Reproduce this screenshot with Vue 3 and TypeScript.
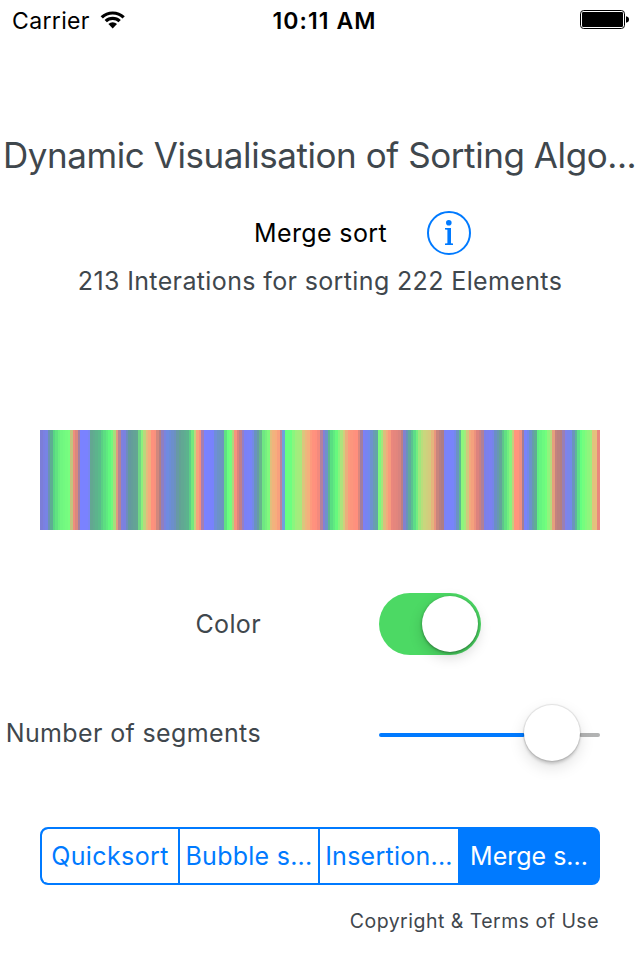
<script setup lang="ts">
import { ref, computed } from 'vue'

type Stop = [number, number, number, number]

const elements = 222
const stripWidth = 560
const useColor = ref(true)
const segments = ref(0.874)
const algorithms = ['Quicksort', 'Bubble s...', 'Insertion...', 'Merge s...']
const selected = ref(3)

// Colour samples along the strip: offset in px, then r, g, b.
const stops: Stop[] = [
  [0, 125, 125, 210], [6, 122, 130, 235], [8, 110, 140, 190], [11, 95, 165, 150], [13, 85, 210, 130], [20, 110, 245, 128], [31, 122, 255, 128], [32, 255, 145, 125], [37, 215, 135, 125], [40, 140, 122, 180],
  [41, 122, 130, 255], [49, 122, 130, 255], [51, 100, 165, 145], [59, 90, 185, 140], [63, 90, 215, 130], [71, 100, 255, 125], [74, 150, 235, 125], [76, 240, 165, 125], [79, 195, 130, 130],
  [81, 130, 128, 220], [86, 120, 130, 225], [88, 100, 150, 160], [98, 100, 168, 145], [101, 120, 250, 125], [104, 170, 225, 125], [106, 220, 195, 125], [110, 245, 170, 125], [112, 255, 145, 125], [116, 245, 145, 125], [118, 190, 130, 125], [121, 170, 125, 135],
  [123, 130, 128, 220], [128, 108, 140, 225], [135, 108, 145, 190], [139, 100, 160, 150], [148, 92, 180, 142], [150, 90, 205, 135], [153, 120, 235, 125], [155, 190, 215, 125], [157, 240, 170, 125], [159, 255, 145, 125], [161, 240, 140, 125], [163, 150, 125, 190],
  [165, 122, 130, 255], [173, 120, 130, 252], [176, 108, 145, 205], [183, 108, 148, 190], [185, 95, 220, 130], [188, 105, 255, 128], [192, 125, 250, 125], [194, 235, 170, 125], [196, 250, 140, 125], [198, 220, 132, 125], [202, 175, 125, 145],
  [204, 122, 128, 245], [212, 120, 132, 250], [216, 105, 148, 185], [220, 100, 165, 145], [223, 110, 230, 130], [229, 130, 250, 125], [231, 235, 185, 125], [237, 250, 170, 125], [240, 245, 150, 125], [241, 180, 130, 160],
  [243, 115, 135, 245], [245, 100, 255, 128], [251, 108, 255, 128], [255, 155, 240, 125], [262, 175, 230, 125], [264, 230, 190, 125], [269, 245, 175, 125], [272, 255, 148, 125], [277, 255, 142, 125], [280, 235, 135, 125], [282, 150, 125, 175],
  [285, 122, 130, 240], [288, 95, 170, 150], [291, 88, 220, 130], [297, 105, 252, 125], [300, 150, 240, 125], [304, 210, 205, 125], [308, 250, 155, 125], [317, 255, 142, 125], [320, 205, 132, 125], [322, 155, 125, 165],
  [324, 125, 128, 245], [330, 112, 138, 235], [333, 108, 150, 185], [337, 100, 165, 165], [339, 120, 250, 125], [342, 165, 230, 125], [345, 235, 180, 125], [349, 250, 160, 125], [351, 235, 135, 125], [359, 222, 132, 125], [363, 175, 125, 135],
  [365, 115, 130, 230], [368, 100, 155, 165], [373, 90, 200, 140], [376, 95, 240, 130], [380, 165, 230, 125], [384, 200, 215, 125], [391, 215, 200, 125], [394, 245, 155, 125], [398, 190, 128, 125], [403, 170, 125, 135],
  [405, 122, 130, 252], [414, 120, 132, 250], [418, 105, 150, 185], [420, 92, 185, 145], [422, 135, 250, 125], [426, 170, 230, 125], [429, 240, 175, 125], [434, 245, 155, 125], [437, 225, 132, 125], [442, 190, 128, 130],
  [445, 125, 128, 230], [452, 122, 128, 245], [455, 108, 142, 200], [461, 98, 165, 150], [464, 90, 215, 132], [470, 125, 250, 125], [473, 200, 205, 125], [475, 255, 150, 125], [480, 255, 148, 125], [483, 165, 125, 145],
  [485, 122, 130, 255], [489, 112, 138, 230], [492, 105, 150, 180], [496, 95, 175, 145], [498, 95, 240, 130], [506, 115, 255, 125], [510, 165, 235, 125], [513, 235, 165, 125], [515, 200, 130, 125], [522, 175, 126, 130],
  [525, 130, 128, 235], [531, 115, 138, 235], [534, 105, 150, 180], [537, 90, 195, 142], [540, 95, 255, 130], [545, 125, 252, 125], [551, 155, 240, 125], [553, 225, 195, 125], [557, 232, 190, 125], [558, 240, 140, 125], [560, 225, 130, 125],
]

function colorAt(x: number): string {
  const next = Math.max(1, stops.findIndex((s) => s[0] >= x))
  const a = stops[next - 1]
  const b = stops[next]
  const t = Math.min(1, Math.max(0, (x - a[0]) / (b[0] - a[0])))
  const [r, g, bl] = [1, 2, 3].map((i) => Math.round(a[i] + (b[i] - a[i]) * t))
  if (useColor.value) return `rgb(${r}, ${g}, ${bl})`
  const grey = Math.round((r + g + bl) / 3)
  return `rgb(${grey}, ${grey}, ${grey})`
}

const bars = computed(() =>
  Array.from({ length: elements }, (_, i) => {
    const step = stripWidth / elements
    const x = Math.round(i * step)
    return { x, width: Math.round((i + 1) * step) - x, fill: colorAt((i + 0.5) * step) }
  }),
)
</script>

<template>
  <main class="screen">
    <header class="status">
      <div class="carrier">
        <span class="carrier-name">Carrier</span>
        <svg class="wifi" width="26" height="20" viewBox="0 0 26 20">
          <path d="M0.6 6.2A17.6 17.6 0 0 1 24.8 6.2L22.5 8.5A14.2 14.2 0 0 0 2.9 8.5Z" />
          <path d="M4.6 10.1A11.6 11.6 0 0 1 20.8 10.1L18.5 12.3A8.4 8.4 0 0 0 6.9 12.3Z" />
          <path d="M8.4 13.9A6.2 6.2 0 0 1 17 13.9L12.7 18.4Z" />
        </svg>
      </div>
      <time class="clock">10:11 AM</time>
      <svg class="battery" width="50" height="20" viewBox="0 0 50 20">
        <rect x="0.5" y="0.5" width="44" height="18" rx="3.2" fill="none" stroke="#000" />
        <rect x="2" y="2" width="41" height="15" rx="1.2" />
        <path d="M46 6.2Q49 6.8 49 9.5T46 12.8Z" />
      </svg>
    </header>

    <h1 class="title">Dynamic Visualisation of Sorting Algo...</h1>
    <div class="current">
      <span class="current-name">Merge sort</span>
      <svg class="info" width="44" height="44" viewBox="0 0 44 44">
        <circle cx="22" cy="22" r="21" fill="none" stroke="#007aff" stroke-width="2" />
        <circle cx="21.8" cy="11.7" r="2.8" fill="#007aff" />
        <path d="M18 17H24V32.2L26 32.6V34H18V32.6L20.4 32.2V18.8L18 18.4Z" fill="#007aff" />
      </svg>
    </div>
    <p class="summary">213 Interations for sorting 222 Elements</p>

    <svg class="strip" width="560" height="100" viewBox="0 0 560 100" shape-rendering="crispEdges">
      <rect v-for="bar in bars" :key="bar.x" :x="bar.x" y="0" :width="bar.width" height="100" :fill="bar.fill" />
    </svg>

    <div class="row color-row">
      <span class="label color-label">Color</span>
      <button class="switch" :class="{ off: !useColor }" aria-label="Color" @click="useColor = !useColor">
        <span class="knob"></span>
      </button>
    </div>

    <div class="row segment-row">
      <span class="label segment-label">Number of segments</span>
      <div class="slider">
        <span class="filled" :style="{ flexGrow: segments }"></span>
        <span class="thumb"></span>
        <span class="rest" :style="{ flexGrow: 1 - segments }"></span>
      </div>
    </div>

    <nav class="tabs">
      <button
        v-for="(name, i) in algorithms"
        :key="name"
        class="tab"
        :class="{ active: selected === i }"
        @click="selected = i"
      >{{ name }}</button>
    </nav>
    <footer class="terms">Copyright &amp; Terms of Use</footer>
  </main>
</template>

<style>
body {
  background: #fff;
}
</style>

<style scoped>
.screen {
  display: flex;
  flex-direction: column;
  width: 640px;
  height: 960px;
  overflow: hidden;
  box-sizing: border-box;
  background: #fff;
  color: #3f474d;
  font-family: Inter, "Liberation Sans", sans-serif;
  font-size: 25px;
  letter-spacing: 0.37px;
  white-space: nowrap;
}
button {
  margin: 0;
  padding: 0;
  border: 0;
  font: inherit;
}
.status {
  display: grid;
  grid-template-columns: 1fr auto 1fr;
  align-items: center;
  height: 40px;
  padding: 0 10px 0 12px;
  color: #000;
}
.carrier {
  display: flex;
  align-items: center;
  gap: 10px;
}
.carrier-name {
  padding-top: 2px;
  font-size: 23px;
  letter-spacing: 0.35px;
}
.clock {
  padding: 2px 0 0 7px;
  font-size: 23px;
  font-weight: 600;
  letter-spacing: 1.1px;
}
.battery {
  justify-self: end;
}
.title {
  margin: 91px 0 0;
  padding-left: 3px;
  height: 48px;
  line-height: 48px;
  font-size: 35px;
  font-weight: 400;
  letter-spacing: -0.43px;
}
.current {
  display: flex;
  align-items: center;
  justify-content: flex-end;
  gap: 40px;
  margin-top: 32px;
  padding-right: 169px;
  height: 44px;
  color: #000;
}
.summary {
  margin: 10px 0 0;
  height: 32px;
  line-height: 32px;
  text-align: center;
}
.strip {
  flex: none;
  margin: 133px 0 0 40px;
}
.row {
  display: grid;
  grid-template-columns: 261px 221px;
  column-gap: 118px;
  align-items: center;
  height: 62px;
}
.color-row {
  margin-top: 63px;
}
.segment-row {
  margin-top: 49px;
}
.label {
  justify-self: end;
}
.segment-label {
  padding-bottom: 4px;
}
.switch {
  display: flex;
  justify-content: flex-end;
  width: 102px;
  height: 62px;
  padding: 3px;
  box-sizing: border-box;
  border-radius: 31px;
  background: #4cd964;
}
.switch.off {
  justify-content: flex-start;
  background: #ddd;
}
.knob {
  width: 56px;
  height: 56px;
  border-radius: 50%;
  background: #fff;
  box-shadow: 0 5px 14px rgba(0, 0, 0, 0.17), 0 1px 3px rgba(0, 0, 0, 0.4);
}
.slider {
  display: flex;
  align-items: center;
}
.filled,
.rest {
  flex-basis: 0;
  height: 4px;
  border-radius: 2px;
}
.filled {
  background: #007aff;
}
.rest {
  background: #b2b3b3;
}
.thumb {
  position: relative;
  width: 56px;
  height: 56px;
  margin: -4px -1px 0;
  border-radius: 50%;
  background: #fff;
  box-shadow: 0 0 1px 1px rgba(0, 0, 0, 0.1), 0 6px 16px rgba(0, 0, 0, 0.13), 0 3px 3px rgba(0, 0, 0, 0.15);
}
.tabs {
  display: grid;
  grid-template-columns: 138px 140px 140px 138px;
  width: 560px;
  height: 58px;
  margin: 61px 0 0 40px;
  box-sizing: border-box;
  border: 2px solid #007aff;
  border-radius: 8px;
  background: #007aff;
  overflow: hidden;
}
.tab {
  border-right: 2px solid #007aff;
  background: #fff;
  color: #007aff;
  letter-spacing: 0.25px;
}
.tab:first-child {
  border-radius: 6px 0 0 6px;
  letter-spacing: 0.4px;
}
.tab:last-child {
  border-right: 0;
  border-radius: 0 6px 6px 0;
  letter-spacing: 0;
}
.tab.active {
  background: #007aff;
  color: #fff;
}
.terms {
  margin-top: 22px;
  padding-right: 41px;
  height: 28px;
  line-height: 28px;
  text-align: right;
  font-size: 19.5px;
  letter-spacing: 0.48px;
}
</style>
